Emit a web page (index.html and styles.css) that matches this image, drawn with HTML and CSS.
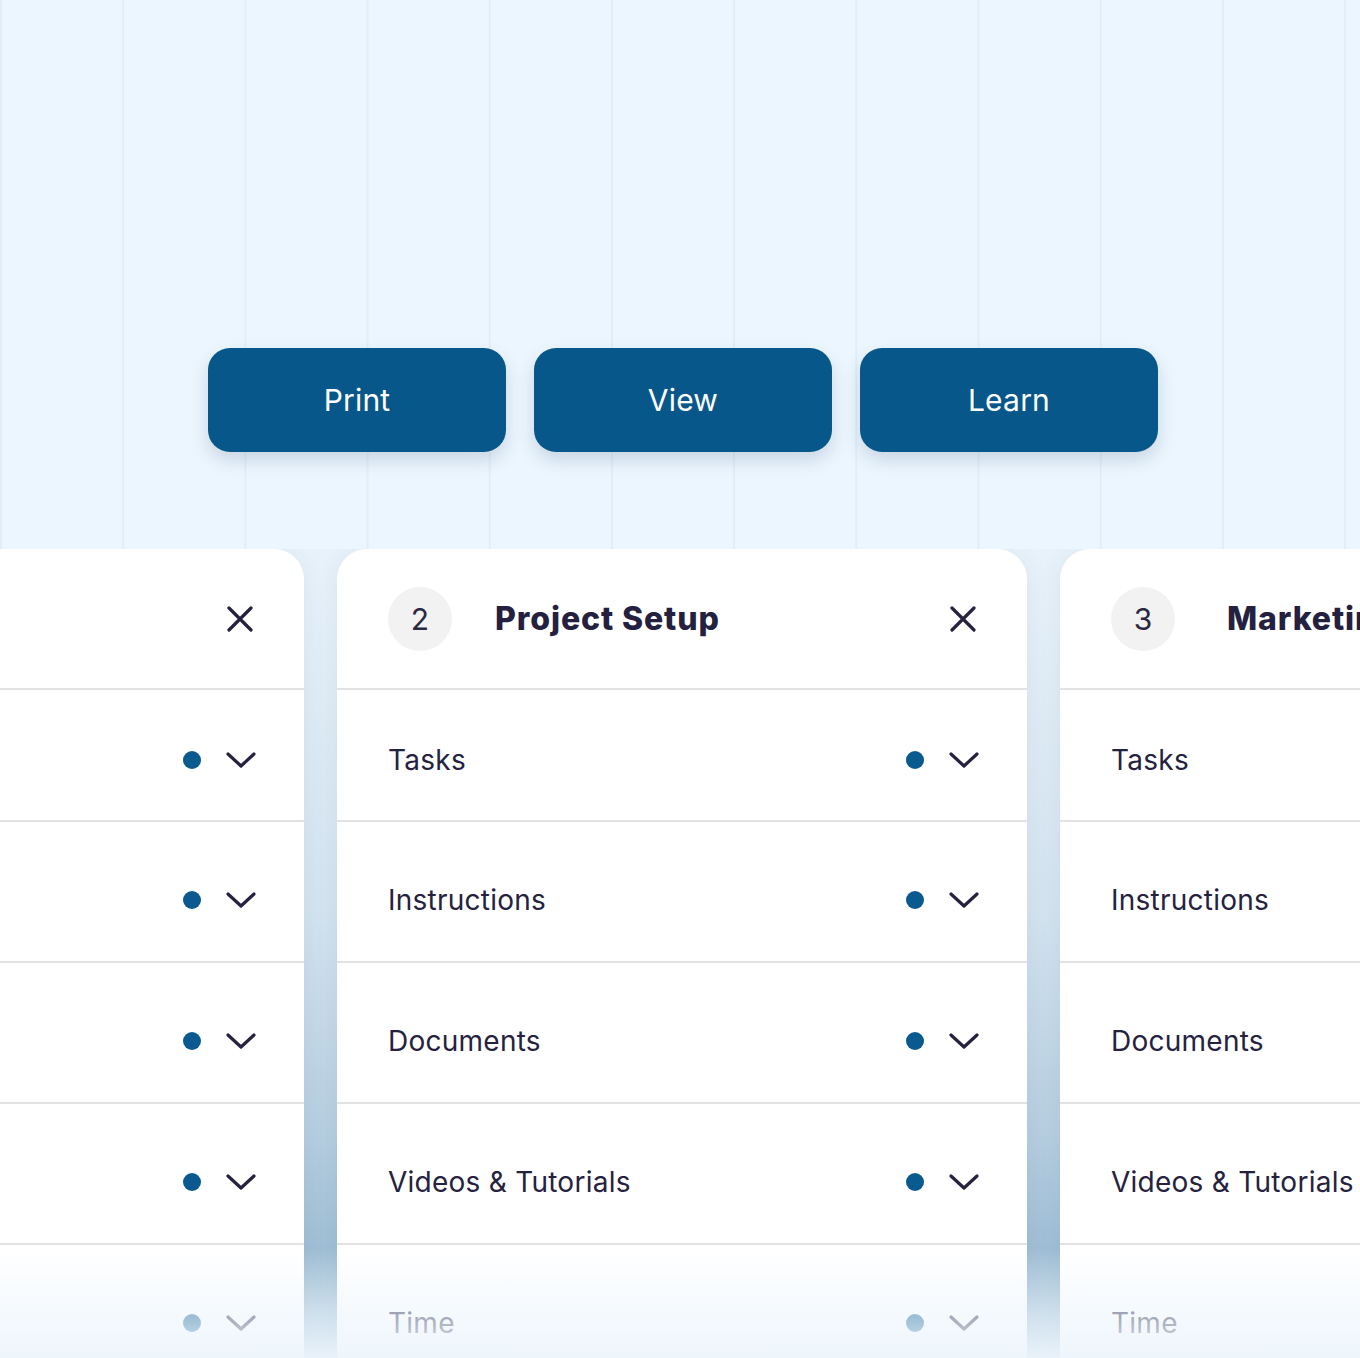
FILE: index.html
```html
<!DOCTYPE html>
<html lang="en">
<head>
<meta charset="utf-8">
<title>Project Steps</title>
<link rel="stylesheet" href="styles.css">
</head>
<body>
<div class="page">
  <div class="actions">
    <button class="btn">Print</button>
    <button class="btn">View</button>
    <button class="btn">Learn</button>
  </div>

  <section class="board">
    <div class="cards">
      <article class="card">
        <header class="card-head">
          <span class="step">1</span>
          <h2 class="title">Overview</h2>
          <svg class="close" viewBox="0 0 26 26"><path d="M2 2 L24 24 M24 2 L2 24"/></svg>
        </header>
        <div class="row row-first"><span class="label">Tasks</span><span class="meta"><span class="dot"></span><svg class="chev" viewBox="0 0 30 16"><path d="M2 2 L15 14 L28 2"/></svg></span></div>
        <div class="row"><span class="label">Instructions</span><span class="meta"><span class="dot"></span><svg class="chev" viewBox="0 0 30 16"><path d="M2 2 L15 14 L28 2"/></svg></span></div>
        <div class="row"><span class="label">Documents</span><span class="meta"><span class="dot"></span><svg class="chev" viewBox="0 0 30 16"><path d="M2 2 L15 14 L28 2"/></svg></span></div>
        <div class="row"><span class="label">Videos &amp; Tutorials</span><span class="meta"><span class="dot"></span><svg class="chev" viewBox="0 0 30 16"><path d="M2 2 L15 14 L28 2"/></svg></span></div>
        <div class="row"><span class="label">Time</span><span class="meta"><span class="dot"></span><svg class="chev" viewBox="0 0 30 16"><path d="M2 2 L15 14 L28 2"/></svg></span></div>
      </article>

      <article class="card">
        <header class="card-head">
          <span class="step">2</span>
          <h2 class="title">Project Setup</h2>
          <svg class="close" viewBox="0 0 26 26"><path d="M2 2 L24 24 M24 2 L2 24"/></svg>
        </header>
        <div class="row row-first"><span class="label">Tasks</span><span class="meta"><span class="dot"></span><svg class="chev" viewBox="0 0 30 16"><path d="M2 2 L15 14 L28 2"/></svg></span></div>
        <div class="row"><span class="label">Instructions</span><span class="meta"><span class="dot"></span><svg class="chev" viewBox="0 0 30 16"><path d="M2 2 L15 14 L28 2"/></svg></span></div>
        <div class="row"><span class="label">Documents</span><span class="meta"><span class="dot"></span><svg class="chev" viewBox="0 0 30 16"><path d="M2 2 L15 14 L28 2"/></svg></span></div>
        <div class="row"><span class="label">Videos &amp; Tutorials</span><span class="meta"><span class="dot"></span><svg class="chev" viewBox="0 0 30 16"><path d="M2 2 L15 14 L28 2"/></svg></span></div>
        <div class="row"><span class="label">Time</span><span class="meta"><span class="dot"></span><svg class="chev" viewBox="0 0 30 16"><path d="M2 2 L15 14 L28 2"/></svg></span></div>
      </article>

      <article class="card card-next">
        <header class="card-head">
          <span class="step">3</span>
          <h2 class="title">Marketing Launch</h2>
          <svg class="close" viewBox="0 0 26 26"><path d="M2 2 L24 24 M24 2 L2 24"/></svg>
        </header>
        <div class="row row-first"><span class="label">Tasks</span><span class="meta"><span class="dot"></span><svg class="chev" viewBox="0 0 30 16"><path d="M2 2 L15 14 L28 2"/></svg></span></div>
        <div class="row"><span class="label">Instructions</span><span class="meta"><span class="dot"></span><svg class="chev" viewBox="0 0 30 16"><path d="M2 2 L15 14 L28 2"/></svg></span></div>
        <div class="row"><span class="label">Documents</span><span class="meta"><span class="dot"></span><svg class="chev" viewBox="0 0 30 16"><path d="M2 2 L15 14 L28 2"/></svg></span></div>
        <div class="row"><span class="label">Videos &amp; Tutorials</span><span class="meta"><span class="dot"></span><svg class="chev" viewBox="0 0 30 16"><path d="M2 2 L15 14 L28 2"/></svg></span></div>
        <div class="row"><span class="label">Time</span><span class="meta"><span class="dot"></span><svg class="chev" viewBox="0 0 30 16"><path d="M2 2 L15 14 L28 2"/></svg></span></div>
      </article>
    </div>
    <div class="fade"></div>
  </section>
</div>
</body>
</html>
```

FILE: styles.css
```css
* { box-sizing: border-box; }

html, body {
  margin: 0;
  padding: 0;
}

body {
  font-family: Inter, "Noto Sans", "Liberation Sans", sans-serif;
  color: #25223f;
  background-color: #ecf6fe;
  background-image: linear-gradient(to right, #e1eef9 0, #e1eef9 2px, transparent 2px);
  background-size: 122.2px 100%;
  background-position: 0 0;
}

.page {
  width: 1360px;
  height: 1358px;
  overflow: hidden;
  display: flex;
  flex-direction: column;
}

.actions {
  display: flex;
  justify-content: center;
  gap: 28px;
  padding-top: 348px;
  padding-left: 6px;
}

.btn {
  width: 298px;
  height: 104px;
  border: 0;
  border-radius: 22px;
  background: #08578a;
  color: #ffffff;
  font-family: Inter, "Noto Sans", "Liberation Sans", sans-serif;
  font-size: 30px;
  font-weight: 400;
  letter-spacing: 0.2px;
  box-shadow: 0 8px 18px rgba(10, 50, 90, 0.16);
  cursor: pointer;
}

.board {
  position: relative;
  margin-top: 97px;
  flex: 1;
  overflow: hidden;
  background: linear-gradient(to bottom, #e8f2fa 0%, #d3e3ef 45%, #b6cee0 72%, #9fbed4 87%, #9fbed4 100%);
}

.cards {
  display: flex;
  justify-content: center;
  gap: 33px;
  padding-left: 4px;
  height: 100%;
}

.card {
  flex: 0 0 690px;
  width: 690px;
  background: #ffffff;
  border-radius: 30px 30px 0 0;
  box-shadow: 0 0 24px rgba(20, 60, 100, 0.06);
}

.card-head {
  height: 141px;
  display: flex;
  align-items: center;
  padding: 0 51px;
  border-bottom: 2px solid #e2e2e2;
}

.step {
  flex: 0 0 64px;
  width: 64px;
  height: 64px;
  border-radius: 50%;
  background: #f2f2f2;
  display: flex;
  align-items: center;
  justify-content: center;
  font-size: 30px;
  font-weight: 400;
  color: #2b2942;
}

.title {
  margin: 0 0 0 43px;
  flex: 1;
  font-size: 32px;
  font-weight: 800;
  letter-spacing: 0.9px;
  color: #24203f;
  white-space: nowrap;
  overflow: hidden;
}

.card-next .title {
  margin-left: 52px;
}

.close {
  width: 26px;
  height: 26px;
  flex: 0 0 26px;
  fill: none;
  stroke: #25223f;
  stroke-width: 3.2;
  stroke-linecap: round;
}

.row {
  height: 141px;
  display: flex;
  align-items: center;
  justify-content: space-between;
  padding: 16px 48px 0 51px;
  border-bottom: 2px solid #e2e2e2;
}

.row-first {
  height: 132px;
  padding-top: 10px;
}

.label {
  font-size: 28px;
  font-weight: 400;
  letter-spacing: 0.25px;
  color: #25223f;
  white-space: nowrap;
}

.meta {
  display: flex;
  align-items: center;
  gap: 25px;
}

.dot {
  width: 18px;
  height: 18px;
  border-radius: 50%;
  background: #0a5a8f;
}

.chev {
  width: 30px;
  height: 16px;
  fill: none;
  stroke: #25223f;
  stroke-width: 3.2;
  stroke-linecap: round;
  stroke-linejoin: round;
}

.fade {
  position: absolute;
  left: 0;
  right: 0;
  bottom: 0;
  height: 110px;
  pointer-events: none;
  background: linear-gradient(to bottom, rgba(238, 246, 253, 0) 0%, rgba(238, 246, 253, 0.62) 60%, rgba(237, 245, 252, 0.95) 100%);
}
```
